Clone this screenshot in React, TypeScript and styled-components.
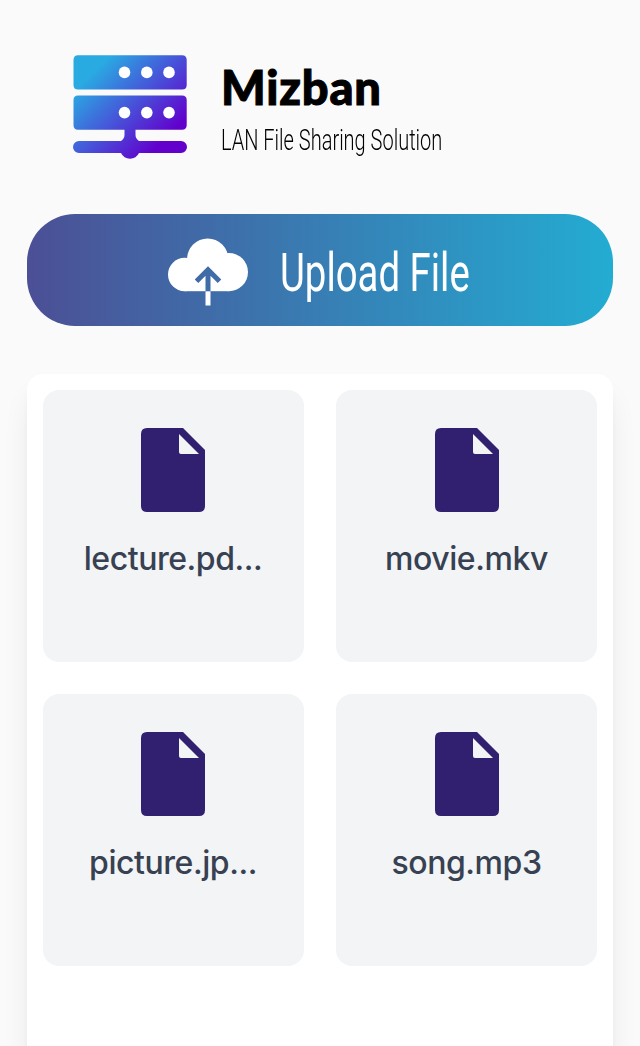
import React from "react";
import styled, { createGlobalStyle } from "styled-components";

const GlobalStyle = createGlobalStyle`
  *, *::before, *::after { box-sizing: border-box; }
  body { margin: 0; background: #fafafa; }
`;

const Page = styled.main`
  height: 100vh;
  overflow: hidden;
  padding: 0 27px;
  background: #fafafa;
  font-family: Inter, "Liberation Sans", sans-serif;
`;

const Header = styled.header`
  display: flex;
  align-items: flex-start;
  height: 214px;
  padding: 55px 0 0 46px;
`;

const Brand = styled.div`
  display: flex;
  flex-direction: column;
  margin: 7px 0 0 34px;
`;

const Title = styled.h1`
  margin: 0;
  font: 900 47px/50px Lato, sans-serif;
  color: #000;
  white-space: nowrap;
  letter-spacing: 0.8px;
  -webkit-text-stroke: 1px #000;
`;

const Tagline = styled.p`
  width: 221px;
  margin: 10px 0 0;
  font: 350 29px/36px Roboto, sans-serif;
  color: #000;
  white-space: nowrap;
  transform: scaleX(0.69);
  transform-origin: left;
`;

const UploadButton = styled.button`
  display: flex;
  align-items: center;
  width: 100%;
  height: 112px;
  padding: 0 0 0 141px;
  border: 0;
  border-radius: 48px;
  background: linear-gradient(90deg, #4c4f95 0%, #23acd2 100%);
  color: #fff;

  svg { margin-top: 4px; }
`;

const UploadLabel = styled.span`
  width: 190px;
  margin: 5px 0 0 32px;
  font: 440 54px/64px Roboto, sans-serif;
  text-align: left;
  white-space: nowrap;
  transform: scaleX(0.71);
  transform-origin: left;
`;

const Panel = styled.section`
  height: 800px;
  margin-top: 48px;
  padding: 16px;
  border-radius: 16px;
  background: #fff;
  box-shadow: 0 20px 30px -6px rgba(0, 0, 0, 0.1), 0 8px 12px -4px rgba(0, 0, 0, 0.04);
`;

const FileGrid = styled.div`
  display: grid;
  grid-template-columns: 1fr 1fr;
  grid-auto-rows: 272px;
  gap: 32px;
`;

const FileCard = styled.article`
  display: flex;
  flex-direction: column;
  align-items: center;
  padding-top: 38px;
  border-radius: 16px;
  background: #f2f4f6;

  &:nth-child(odd) { padding-right: 1px; }
`;

const FileName = styled.span`
  margin-top: 27px;
  font-size: 32px;
  font-weight: 450;
  line-height: 40px;
  letter-spacing: -0.45px;
  color: #374151;
  white-space: nowrap;
`;

const ServerLogo = () => (
  <svg width="114" height="104" viewBox="73 55 114 104" aria-hidden="true">
    <defs>
      <linearGradient id="logo" gradientUnits="userSpaceOnUse" x1="94" y1="71" x2="164" y2="141">
        <stop offset="0" stopColor="#29abe2" />
        <stop offset="0.5" stopColor="#4655d9" />
        <stop offset="1" stopColor="#6200cc" />
      </linearGradient>
    </defs>
    <g fill="url(#logo)">
      <path d="M78 55.300H182Q186.700 55.300 186.700 60V85Q186.700 89.500 182 89.500H78Q73.500 89.500 73.500 85V60Q73.500 55.300 78 55.300Z" />
      <path d="M78 95.500H182Q186.700 95.500 186.700 100V125Q186.700 129.700 182 129.700H135.500V135Q135.500 138.500 139 141H181A6 6 0 0 1 181 153H139A10 10 0 0 1 121 153H79A6 6 0 0 1 79 141H121Q124.500 138.500 124.500 135V129.700H78Q73.500 129.700 73.500 125V100Q73.500 95.500 78 95.500Z" />
    </g>
    <g fill="#fff">
      {[72.4, 112.6].map((y) => [124.5, 146.8, 169].map((x) => <circle key={`${x}-${y}`} cx={x} cy={y} r="5.8" />))}
    </g>
  </svg>
);

const CloudUploadIcon = () => (
  <svg width="80" height="68" viewBox="168 238 80 68" aria-hidden="true">
    <mask id="arrow" maskUnits="userSpaceOnUse" x="168" y="238" width="80" height="68">
      <rect x="168" y="238" width="80" height="68" fill="#fff" />
      <path d="M208 292V270M196.500 281.200L208 269.700L219.500 281.200" fill="none" stroke="#000" strokeWidth="5" />
    </mask>
    <g fill="#fff" mask="url(#arrow)">
      <circle cx="184.700" cy="274.500" r="16.700" />
      <circle cx="207.700" cy="259.100" r="20.600" />
      <circle cx="228.900" cy="272.100" r="19.100" />
      <rect x="184.700" y="262" width="44.200" height="29.200" />
    </g>
    <path fill="#fff" d="M205.500 291.300H210.500V305.500H205.500Z" />
  </svg>
);

const FileIcon = () => (
  <svg width="64" height="84" viewBox="0 0 64 84" aria-hidden="true">
    <path
      fill="#311f6f"
      fillRule="evenodd"
      d="M6 0H42L64 22V78Q64 84 58 84H6Q0 84 0 78V6Q0 0 6 0ZM38 6V24Q38 26 40 26H58Z"
    />
  </svg>
);

const files = ["lecture.pd...", "movie.mkv", "picture.jp...", "song.mp3"];

export default function App() {
  return (
    <>
      <GlobalStyle />
      <Page>
        <Header>
          <ServerLogo />
          <Brand>
            <Title>Mizban</Title>
            <Tagline>LAN File Sharing Solution</Tagline>
          </Brand>
        </Header>
        <UploadButton type="button">
          <CloudUploadIcon />
          <UploadLabel>Upload File</UploadLabel>
        </UploadButton>
        <Panel>
          <FileGrid>
            {files.map((name) => (
              <FileCard key={name}>
                <FileIcon />
                <FileName>{name}</FileName>
              </FileCard>
            ))}
          </FileGrid>
        </Panel>
      </Page>
    </>
  );
}
